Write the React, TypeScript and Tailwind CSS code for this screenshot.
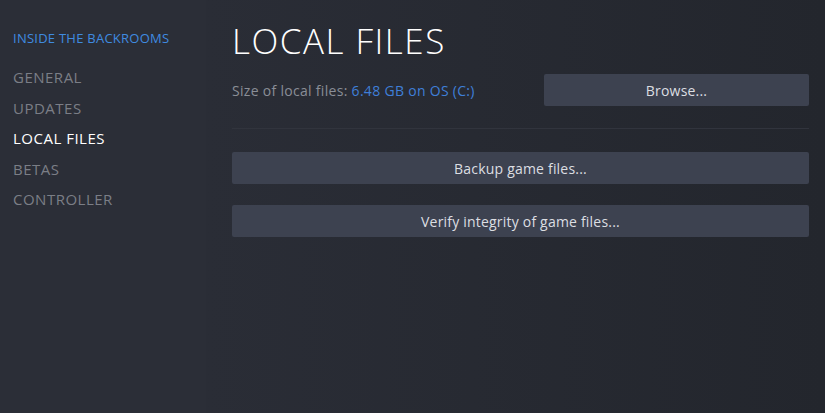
import React from "react";

export default function App() {
  const font = { fontFamily: '"Open Sans", "Noto Sans", Arial, sans-serif' };
  return (
    <div
      className="w-[825px] h-[413px] flex overflow-hidden bg-[#262931]"
      style={font}
    >
      <div className="w-[206px] shrink-0 bg-[#2b2e37] flex flex-col pl-[13px] pt-[29px]">
        <div className="text-[13px] leading-[18px] text-[#3f8be0] tracking-[0.25px]">
          INSIDE THE BACKROOMS
        </div>
        <div className="mt-[20px] flex flex-col gap-[9.5px] text-[15px] leading-[21px] tracking-[0.5px] font-medium">
          <div className="text-[#7b7e86]">GENERAL</div>
          <div className="text-[#7b7e86]">UPDATES</div>
          <div className="text-white">LOCAL FILES</div>
          <div className="text-[#7b7e86]">BETAS</div>
          <div className="text-[#7b7e86]">CONTROLLER</div>
        </div>
      </div>
      <div className="flex-1 bg-gradient-to-r from-[#2a2d36] to-[#23262d] pl-[26px] pr-[16px] pt-[20px]">
        <div className="text-[35px] leading-[42px] font-light text-white tracking-[1.5px]">
          LOCAL FILES
        </div>
        <div className="mt-[12px] flex items-center justify-between">
          <div className="text-[14px] text-[#8a8e97] tracking-[0.3px]">
            Size of local files: <span className="text-[#3f7fd8]">6.48 GB on OS (C:)</span>
          </div>
          <button className="w-[265px] h-[32px] bg-[#3d4250] rounded-[2px] text-[14px] text-[#dcdee2] tracking-[0.2px]">
            Browse...
          </button>
        </div>
        <div className="mt-[22px] h-px bg-[#31343d]" />
        <div className="mt-[23px] flex flex-col gap-[21px]">
          <button className="w-full h-[32px] bg-[#3d4250] rounded-[2px] text-[14px] text-[#dcdee2] tracking-[0.2px]">
            Backup game files...
          </button>
          <button className="w-full h-[32px] bg-[#3d4250] rounded-[2px] text-[14px] text-[#dcdee2] tracking-[0.2px]">
            Verify integrity of game files...
          </button>
        </div>
      </div>
    </div>
  );
}
